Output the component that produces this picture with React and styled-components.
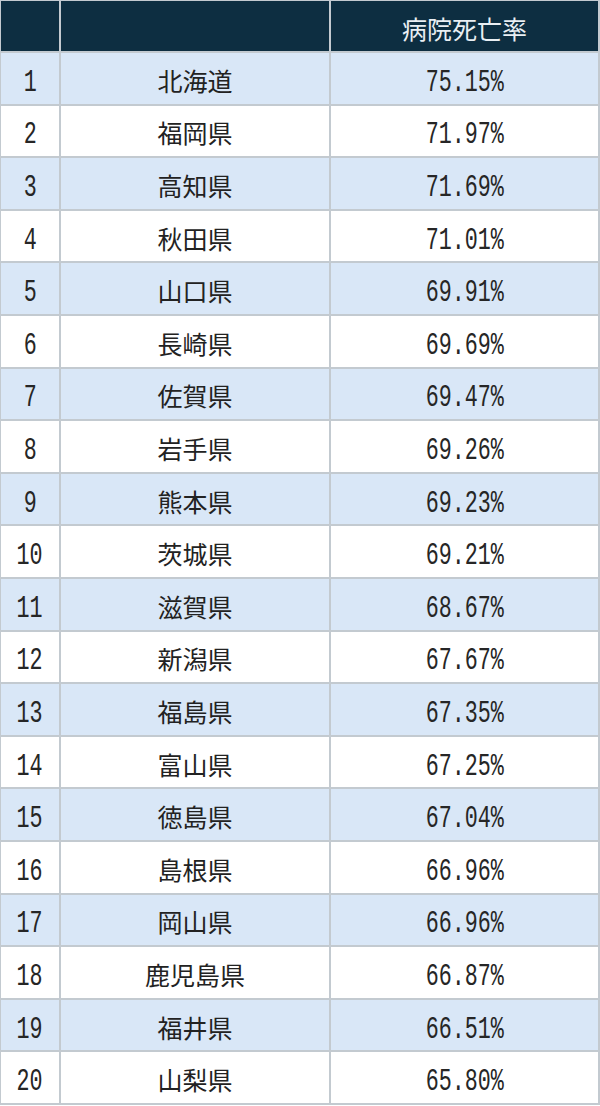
import React from 'react';
import styled, { createGlobalStyle } from 'styled-components';

const rows = [
  ['北海道', '75.15%'],
  ['福岡県', '71.97%'],
  ['高知県', '71.69%'],
  ['秋田県', '71.01%'],
  ['山口県', '69.91%'],
  ['長崎県', '69.69%'],
  ['佐賀県', '69.47%'],
  ['岩手県', '69.26%'],
  ['熊本県', '69.23%'],
  ['茨城県', '69.21%'],
  ['滋賀県', '68.67%'],
  ['新潟県', '67.67%'],
  ['福島県', '67.35%'],
  ['富山県', '67.25%'],
  ['徳島県', '67.04%'],
  ['島根県', '66.96%'],
  ['岡山県', '66.96%'],
  ['鹿児島県', '66.87%'],
  ['福井県', '66.51%'],
  ['山梨県', '65.80%'],
];

const GlobalStyle = createGlobalStyle`
  body {
    margin: 0;
    background: #ffffff;
  }
`;

const Table = styled.div`
  box-sizing: border-box;
  width: 600px;
  height: 1105px;
  display: grid;
  grid-template-columns: 58px 268px 267px;
  grid-template-rows: 50px repeat(20, 1fr);
  gap: 2px;
  padding: 1px 2px 2px 1px;
  background: #c3cad0;
`;

const Cell = styled.div`
  display: flex;
  align-items: center;
  justify-content: center;
  padding-top: 4px;
  box-sizing: border-box;
  background: ${(p) => (p.$header ? '#0d2e41' : p.$striped ? '#d9e7f7' : '#ffffff')};
  color: ${(p) => (p.$header ? '#e9eff3' : '#222222')};
  font-family: 'Noto Sans CJK JP', 'Noto Sans', sans-serif;
  font-size: 25px;
  line-height: 1;
`;

const Num = styled.span`
  display: inline-block;
  margin-top: 4px;
  font-family: 'Liberation Mono', 'DejaVu Sans Mono', monospace;
  font-size: 31px;
  transform: scaleX(0.7);
  color: #262626;
`;

export default function App() {
  return (
    <>
      <GlobalStyle />
      <Table>
        <Cell $header />
        <Cell $header />
        <Cell $header>病院死亡率</Cell>
        {rows.map(([pref, rate], i) => {
          const striped = i % 2 === 0;
          return (
            <React.Fragment key={pref + i}>
              <Cell $striped={striped}>
                <Num>{i + 1}</Num>
              </Cell>
              <Cell $striped={striped}>{pref}</Cell>
              <Cell $striped={striped}>
                <Num>{rate}</Num>
              </Cell>
            </React.Fragment>
          );
        })}
      </Table>
    </>
  );
}
